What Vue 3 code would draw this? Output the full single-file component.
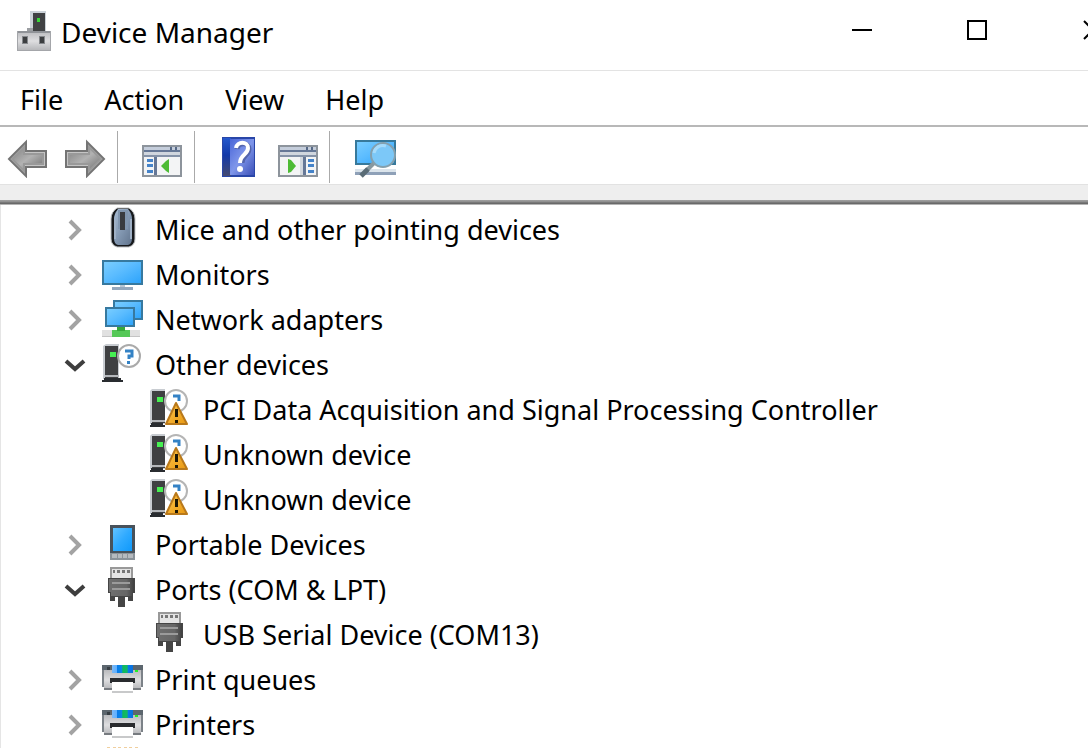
<script setup>
const menus = ['File', 'Action', 'View', 'Help']

const rows = [
  { label: 'Mice and other pointing devices', icon: 'mouse', state: 'closed' },
  { label: 'Monitors', icon: 'monitor', state: 'closed' },
  { label: 'Network adapters', icon: 'network', state: 'closed' },
  { label: 'Other devices', icon: 'unknown', state: 'open' },
  { label: 'PCI Data Acquisition and Signal Processing Controller', icon: 'warning', child: true },
  { label: 'Unknown device', icon: 'warning', child: true },
  { label: 'Unknown device', icon: 'warning', child: true },
  { label: 'Portable Devices', icon: 'portable', state: 'closed' },
  { label: 'Ports (COM & LPT)', icon: 'port', state: 'open' },
  { label: 'USB Serial Device (COM13)', icon: 'port', child: true },
  { label: 'Print queues', icon: 'printer', state: 'closed' },
  { label: 'Printers', icon: 'printer', state: 'closed' },
  { label: '', icon: 'chip' },
]
</script>

<template>
  <div class="window">
    <svg class="defs" width="0" height="0" aria-hidden="true">
      <defs>
        <linearGradient id="blue" x1="0" y1="0" x2="1" y2="1">
          <stop offset="0" stop-color="#7ccfff" /><stop offset=".45" stop-color="#5bbcff" /><stop offset="1" stop-color="#2aa2fb" />
        </linearGradient>
        <linearGradient id="silver" x1="0" y1="0" x2="0" y2="1">
          <stop offset="0" stop-color="#b9babd" /><stop offset=".5" stop-color="#dedee0" /><stop offset="1" stop-color="#b2b3b6" />
        </linearGradient>
        <linearGradient id="arrow" x1="0" y1="0" x2="1" y2="1">
          <stop offset="0" stop-color="#808080" /><stop offset=".5" stop-color="#b2b2b2" /><stop offset="1" stop-color="#6c6c6c" />
        </linearGradient>
        <linearGradient id="book" x1="0" y1="0" x2="1" y2="1">
          <stop offset="0" stop-color="#4a66d8" /><stop offset=".5" stop-color="#7f96ea" /><stop offset="1" stop-color="#3c50b8" />
        </linearGradient>
        <linearGradient id="spine" x1="0" y1="0" x2="0" y2="1">
          <stop offset="0" stop-color="#2458cc" /><stop offset=".45" stop-color="#1238a8" /><stop offset="1" stop-color="#454a70" />
        </linearGradient>
        <linearGradient id="mouseBody" x1="0" y1="0" x2="1" y2="1">
          <stop offset="0" stop-color="#a9bdd4" /><stop offset=".5" stop-color="#8398b2" /><stop offset="1" stop-color="#60738c" />
        </linearGradient>
        <linearGradient id="phone" x1="0" y1="0" x2="1" y2="1">
          <stop offset="0" stop-color="#62c2ff" /><stop offset=".5" stop-color="#2faaff" /><stop offset="1" stop-color="#0f99fb" />
        </linearGradient>
        <linearGradient id="plug" x1="0" y1="0" x2="1" y2="0">
          <stop offset="0" stop-color="#6f6f6f" /><stop offset=".7" stop-color="#666" /><stop offset="1" stop-color="#404040" />
        </linearGradient>
        <linearGradient id="sheet" x1="0" y1="0" x2="1" y2="0">
          <stop offset="0" stop-color="#7db9f5" /><stop offset=".22" stop-color="#5eb0ff" /><stop offset=".25" stop-color="#087be8" /><stop offset=".45" stop-color="#0887e8" />
          <stop offset=".52" stop-color="#10b95a" /><stop offset=".72" stop-color="#12b868" /><stop offset=".78" stop-color="#0879ee" /><stop offset="1" stop-color="#0872dc" />
        </linearGradient>
        <linearGradient id="amber" x1="0" y1="0" x2="1" y2="1">
          <stop offset="0" stop-color="#ffc64a" /><stop offset="1" stop-color="#e89812" />
        </linearGradient>
      </defs>
    </svg>

    <header class="titlebar">
      <svg class="app-icon" width="34" height="41" viewBox="0 0 34 41" aria-hidden="true">
        <path d="M13 0h16v21H13z" fill="#cbd2d8" />
        <path d="M16 2h12v18H16z" fill="#404244" />
        <rect x="20" y="7" width="3" height="4" fill="#38d638" />
        <path d="M10 17h6v4h-6z" fill="#9b9ea2" />
        <rect x="1" y="20" width="32" height="20" fill="url(#silver)" />
        <path d="M0 20h34v2H0z" fill="#909398" />
        <path d="M0 20h1v20H0zM33 20h1v20h-1zM0 39h34v1H0z" fill="#a4a6aa" />
        <path d="M5 25h6v8H5zM22 25h6v8h-6z" fill="#85888c" />
        <path d="M6 26h4v6H6zM23 26h4v6h-4z" fill="#3c3e40" />
      </svg>
      <h1>Device Manager</h1>
      <div class="controls">
        <button aria-label="Minimize"><svg width="22" height="22"><path d="M1 11h20" /></svg></button>
        <button aria-label="Maximize"><svg width="22" height="22"><path d="M2 2h18v18H2z" /></svg></button>
        <button aria-label="Close"><svg width="22" height="22"><path d="M3 2l18 18M21 2L3 20" /></svg></button>
      </div>
    </header>

    <nav class="menubar">
      <button v-for="m in menus" :key="m">{{ m }}</button>
    </nav>

    <div class="toolbar">
      <div class="group nav">
        <button aria-label="Back">
          <svg width="42" height="42" viewBox="0 0 42 42">
            <path d="M3 23L20 6v9h20v16H20v9z" fill="#c4c4c4" stroke="#747474" stroke-width="2" />
            <path d="M6 23L18 11v7h19v10H18v7z" fill="url(#arrow)" stroke="#999" stroke-width="2" />
          </svg>
        </button>
        <button aria-label="Forward">
          <svg width="42" height="42" viewBox="0 0 42 42">
            <path d="M40 23L23 6v9H2v16h21v9z" fill="#c4c4c4" stroke="#747474" stroke-width="2" />
            <path d="M37 23L25 11v7H5v10h20v7z" fill="url(#arrow)" stroke="#999" stroke-width="2" />
          </svg>
        </button>
      </div>
      <div class="group tree-toggle">
        <button aria-label="Show or hide console tree">
          <svg width="40" height="42" viewBox="0 0 40 42">
            <rect x="1" y="10" width="38" height="30" fill="#f3f4f5" stroke="#8d949c" stroke-width="2" />
            <path d="M2 11h36v3H2z" fill="#c4cddb" /><path d="M2 14h36v2H2z" fill="#657796" />
            <path d="M28 11h2v3h-2zM33 11h2v3h-2z" fill="#566987" />
            <path d="M2 16h36v3H2z" fill="#d0d6de" /><path d="M2 19h36v2H2z" fill="#8492a8" />
            <path d="M12 21h3v18h-3z" fill="#657796" />
            <path d="M5 23h6v3H5zM5 28h6v3H5zM5 34h6v3H5z" fill="#4583c9" />
            <path d="M19 30l5-5l3-2v14l-3-2z" fill="#4dbb35" />
          </svg>
        </button>
      </div>
      <div class="group help">
        <button aria-label="Help">
          <svg width="34" height="42" viewBox="0 0 34 42">
            <rect x="0" y="1" width="33" height="40" fill="#2946a8" />
            <rect x="1" y="2" width="8" height="38" fill="url(#spine)" />
            <rect x="8" y="3" width="24" height="36" fill="url(#book)" />
            <path d="M15 13c1-7 12-7 12 0c0 7-7 6-7 14" fill="none" stroke="#5364ac" stroke-width="5" />
            <path d="M14 12c1-7 12-7 12 0c0 7-8 6-8 15" fill="none" stroke="#fff" stroke-width="4" />
            <circle cx="18" cy="33" r="3" fill="#fff" />
          </svg>
        </button>
        <button aria-label="Show or hide action pane">
          <svg width="40" height="42" viewBox="0 0 40 42">
            <rect x="1" y="10" width="38" height="30" fill="#f3f4f5" stroke="#8d949c" stroke-width="2" />
            <path d="M2 11h36v3H2z" fill="#c4cddb" /><path d="M2 14h36v2H2z" fill="#657796" />
            <path d="M28 11h2v3h-2zM33 11h2v3h-2z" fill="#566987" />
            <path d="M2 16h36v3H2z" fill="#d0d6de" /><path d="M2 19h36v2H2z" fill="#8492a8" />
            <path d="M25 21h3v18h-3z" fill="#657796" />
            <path d="M22 21h3v18h-3z" fill="#d3d8de" />
            <path d="M30 23h6v3h-6zM30 28h6v3h-6zM30 34h6v3h-6z" fill="#4583c9" />
            <path d="M10 23l3 1l5 6l-5 6l-3 1z" fill="#4dbb35" />
          </svg>
        </button>
      </div>
      <div class="group scan">
        <button aria-label="Scan for hardware changes">
          <svg width="42" height="42" viewBox="0 0 42 42">
            <rect x="1" y="5" width="39" height="23" fill="url(#blue)" stroke="#37799b" stroke-width="2" />
            <path d="M0 33h41v3H0z" fill="#dbe4eb" /><path d="M0 36h41v3H0z" fill="#8fa1b8" />
            <path d="M22 28h10v3H22z" fill="#b9c7d3" />
            <path d="M19 27L11 35" stroke="#88989f" stroke-width="4" />
            <path d="M13 33L6 40" stroke="#5a6c76" stroke-width="5" />
            <circle cx="28" cy="19" r="12" fill="#7cc8f8" stroke="#84a0ae" stroke-width="2" />
            <path d="M19 17a9 9 0 0 1 12 -7" fill="none" stroke="#a5dbfb" stroke-width="3" />
          </svg>
        </button>
      </div>
    </div>
    <div class="divider"></div>

    <main class="pane">
      <ul class="tree">
        <li v-for="(r, i) in rows" :key="i" :class="{ child: r.child }">
          <span class="toggle">
            <button v-if="r.state" :class="r.state" :aria-label="(r.state === 'open' ? 'Collapse ' : 'Expand ') + r.label" :aria-expanded="r.state === 'open'">
              <svg width="22" height="22" viewBox="0 0 22 22">
                <path v-if="r.state === 'open'" d="M2 7l9 8l9-8" />
                <path v-else d="M6 2l9 9l-9 9" />
              </svg>
            </button>
          </span>
          <svg class="icon" width="42" height="42" viewBox="0 0 42 42" aria-hidden="true">
            <g v-if="r.icon === 'mouse'">
              <path d="M15 1h12q6 4 6 11v20q0 6-6 8H15q-6-2-6-8V12q0-7 6-11z" fill="#17191c" stroke="#c2c5c8" />
              <path d="M16 2h10q4 5 4 10v19q0 6-4 7H16q-4-1-4-7V12q0-5 4-10z" fill="url(#mouseBody)" />
              <path d="M13 12v20M29 12v20" stroke="#9fb0c5" stroke-width="2" />
              <path d="M16 3h10v19H16z" fill="#8095ae" /><path d="M18 5h5v18h-5z" fill="#393b3f" />
            </g>
            <g v-else-if="r.icon === 'monitor'">
              <rect x="1" y="9" width="39" height="23" fill="url(#blue)" stroke="#37799f" stroke-width="2" />
              <path d="M18 33h5v2h-5z" fill="#b7c6d5" /><path d="M10 35h21v3H10z" fill="#94a8be" />
            </g>
            <g v-else-if="r.icon === 'network'">
              <path d="M0 33h38v7H0z" fill="#e1e1e1" /><path d="M0 39h38v1H0z" fill="#c4c4c4" />
              <rect x="12" y="4" width="28" height="18" fill="url(#blue)" stroke="#37799f" stroke-width="2" />
              <rect x="4" y="11" width="28" height="18" fill="url(#blue)" stroke="#37799f" stroke-width="2" />
              <path d="M15 30h8v3h5v7H10v-7h5z" fill="#55c857" /><path d="M15 30h8v4h-8z" fill="#38a83b" />
            </g>
            <g v-else-if="r.icon === 'unknown'">
              <path d="M1 4l3-2h13v35H1z" fill="#c8ccd1" /><path d="M3 4h13v32H3z" fill="#3f4042" />
              <path d="M2 36h17v2h2v2H0v-2h2z" fill="#292c30" /><path d="M3 33h14v2H3z" fill="#b4b7bb" />
              <rect x="8" y="10" width="6" height="5" fill="#46f052" />
              <circle cx="27" cy="14" r="11" fill="#fff" stroke="#aaa" stroke-width="2" />
              <path d="M23 9h7v5h-3v3" fill="none" stroke="#3482c5" stroke-width="3" /><path d="M25 19h3v3h-3z" fill="#3482c5" />
            </g>
            <g v-else-if="r.icon === 'warning'">
              <path d="M0 4l2-2h13v35H0z" fill="#c8ccd1" /><path d="M2 4h13v32H2z" fill="#3f4042" />
              <path d="M1 36h12v2h2v2H0v-2h1z" fill="#292c30" /><path d="M2 33h13v2H2z" fill="#b4b7bb" />
              <rect x="7" y="10" width="6" height="5" fill="#46f052" />
              <circle cx="26" cy="14" r="11" fill="#fff" stroke="#b5b5b5" stroke-width="2" />
              <path d="M23 9h6v5" fill="none" stroke="#3482c5" stroke-width="3" />
              <path d="M26 16l11 21H16z" fill="url(#amber)" stroke="#b9791b" stroke-width="2" stroke-linejoin="round" />
              <path d="M25 22h3v8h-3zM25 33h3v3h-3z" fill="#1d1705" />
            </g>
            <g v-else-if="r.icon === 'portable'">
              <rect x="8" y="3" width="25" height="35" fill="#48525b" />
              <rect x="11" y="6" width="19" height="23" fill="url(#phone)" />
              <path d="M8 31h25v7H8z" fill="#8a9299" />
              <path d="M10 32h5v4h-5zM16 32h4v4h-4zM21 32h4v4h-4zM26 32h5v4h-5z" fill="#b5babf" />
            </g>
            <g v-else-if="r.icon === 'port'">
              <rect x="9" y="1" width="21" height="11" fill="#e4e4e4" stroke="#999" stroke-width="2" />
              <path d="M11 3h2v3h-2zM15 3h3v3h-3zM20 3h3v3h-3zM25 3h3v3h-3z" fill="#777" />
              <path d="M6 11h27v15h-2v8h-5v-4h-3v10h-7V30h-3v4H8v-8H6z" fill="#454545" />
              <path d="M7 12h25v13h-2v4H9v-4H7z" fill="url(#plug)" />
              <path d="M10 15h18v2H10zM10 21h18v2H10z" fill="#9b9b9b" />
            </g>
            <g v-else-if="r.icon === 'printer'">
              <path d="M0 8h41v6H0z" fill="#5c666e" /><path d="M0 13h41v17h-2v3H2v-3H0z" fill="url(#silver)" />
              <path d="M0 13h2v17H0zM39 13h2v17h-2z" fill="#7c8288" />
              <path d="M2 31h37v2H2z" fill="#777b80" />
              <path d="M10 8h21v8H10z" fill="url(#sheet)" /><path d="M5 10h3v3H5z" fill="#363d43" />
              <rect x="33" y="13" width="3" height="2" fill="#24ef24" />
              <path d="M8 21h25v5H8z" fill="#292b2e" /><path d="M10 25h21v10H10z" fill="#fff" />
              <path d="M10 34h21v2H10z" fill="#c8c9ca" />
            </g>
            <path v-else d="M5 0h3v1H5zM11 0h3v1h-3zM16 0h3v1h-3zM22 0h3v1h-3zM27 0h3v1h-3zM33 0h3v1h-3z" fill="#f0cf9e" />
          </svg>
          <span class="label">{{ r.label }}</span>
        </li>
      </ul>
    </main>
  </div>
</template>

<style>
body { margin: 0; }
</style>

<style scoped>
.window {
  display: flex;
  flex-direction: column;
  height: 100vh;
  overflow: hidden;
  background: #fff;
  color: #000;
  font: 27px/44px "Noto Sans", "Open Sans", sans-serif;
}
.defs { position: absolute; }
button {
  display: flex;
  align-items: center;
  justify-content: center;
  margin: 0;
  padding: 0;
  border: 0;
  background: none;
  color: inherit;
  font: inherit;
}
svg { display: block; flex: none; }
.titlebar {
  display: flex;
  flex: none;
  align-items: flex-start;
  height: 70px;
  border-bottom: 1px solid #e3e3e3;
}
.app-icon { margin: 11px 10px 0 17px; }
h1 { margin: 10px 0 0; font-size: 28px; line-height: 44px; font-weight: 400; white-space: nowrap; }
.controls { display: flex; margin: 0 -61px 0 auto; }
.controls button { width: 115px; height: 60px; }
.controls path { fill: none; stroke: #000; stroke-width: 2; }
.menubar {
  display: flex;
  flex: none;
  align-items: center;
  gap: 41px;
  height: 54px;
  padding: 0 20px;
  border-bottom: 2px solid #b8b8b8;
}
.menubar button { padding-top: 4px; }
.toolbar {
  display: flex;
  flex: none;
  padding: 4px 0 1px;
}
.group { display: flex; align-items: center; height: 52px; border-right: 1px solid #aaa; }
.nav { gap: 16px; padding: 0 11px 0 6px; }
.tree-toggle { padding: 0 12px 0 24px; }
.help { gap: 22px; padding: 0 11px 0 27px; }
.scan { padding-left: 25px; border: 0; }
.divider {
  flex: none;
  height: 21px;
  background: linear-gradient(#e2e2e2 1px, #eee 1px 16px, #a2a2a2 16px, #8c8c8c 18px, #666 19px, #6c6c6c 20px, #b4b4b4 20px);
}
.pane {
  flex: 1;
  min-height: 0;
  overflow: hidden;
  border-left: 1px solid #e5e5e5;
}
.tree { margin: 0; padding: 2px 0 0 63px; list-style: none; }
.tree li { display: flex; height: 45px; }
.tree .child { padding-left: 48px; }
.toggle { display: flex; width: 38px; }
.toggle path { fill: none; stroke: #a3a3a3; stroke-width: 4; }
.toggle .open path { stroke: #3e3e3e; }
.label { margin-left: 11px; line-height: 46px; white-space: nowrap; }
</style>
